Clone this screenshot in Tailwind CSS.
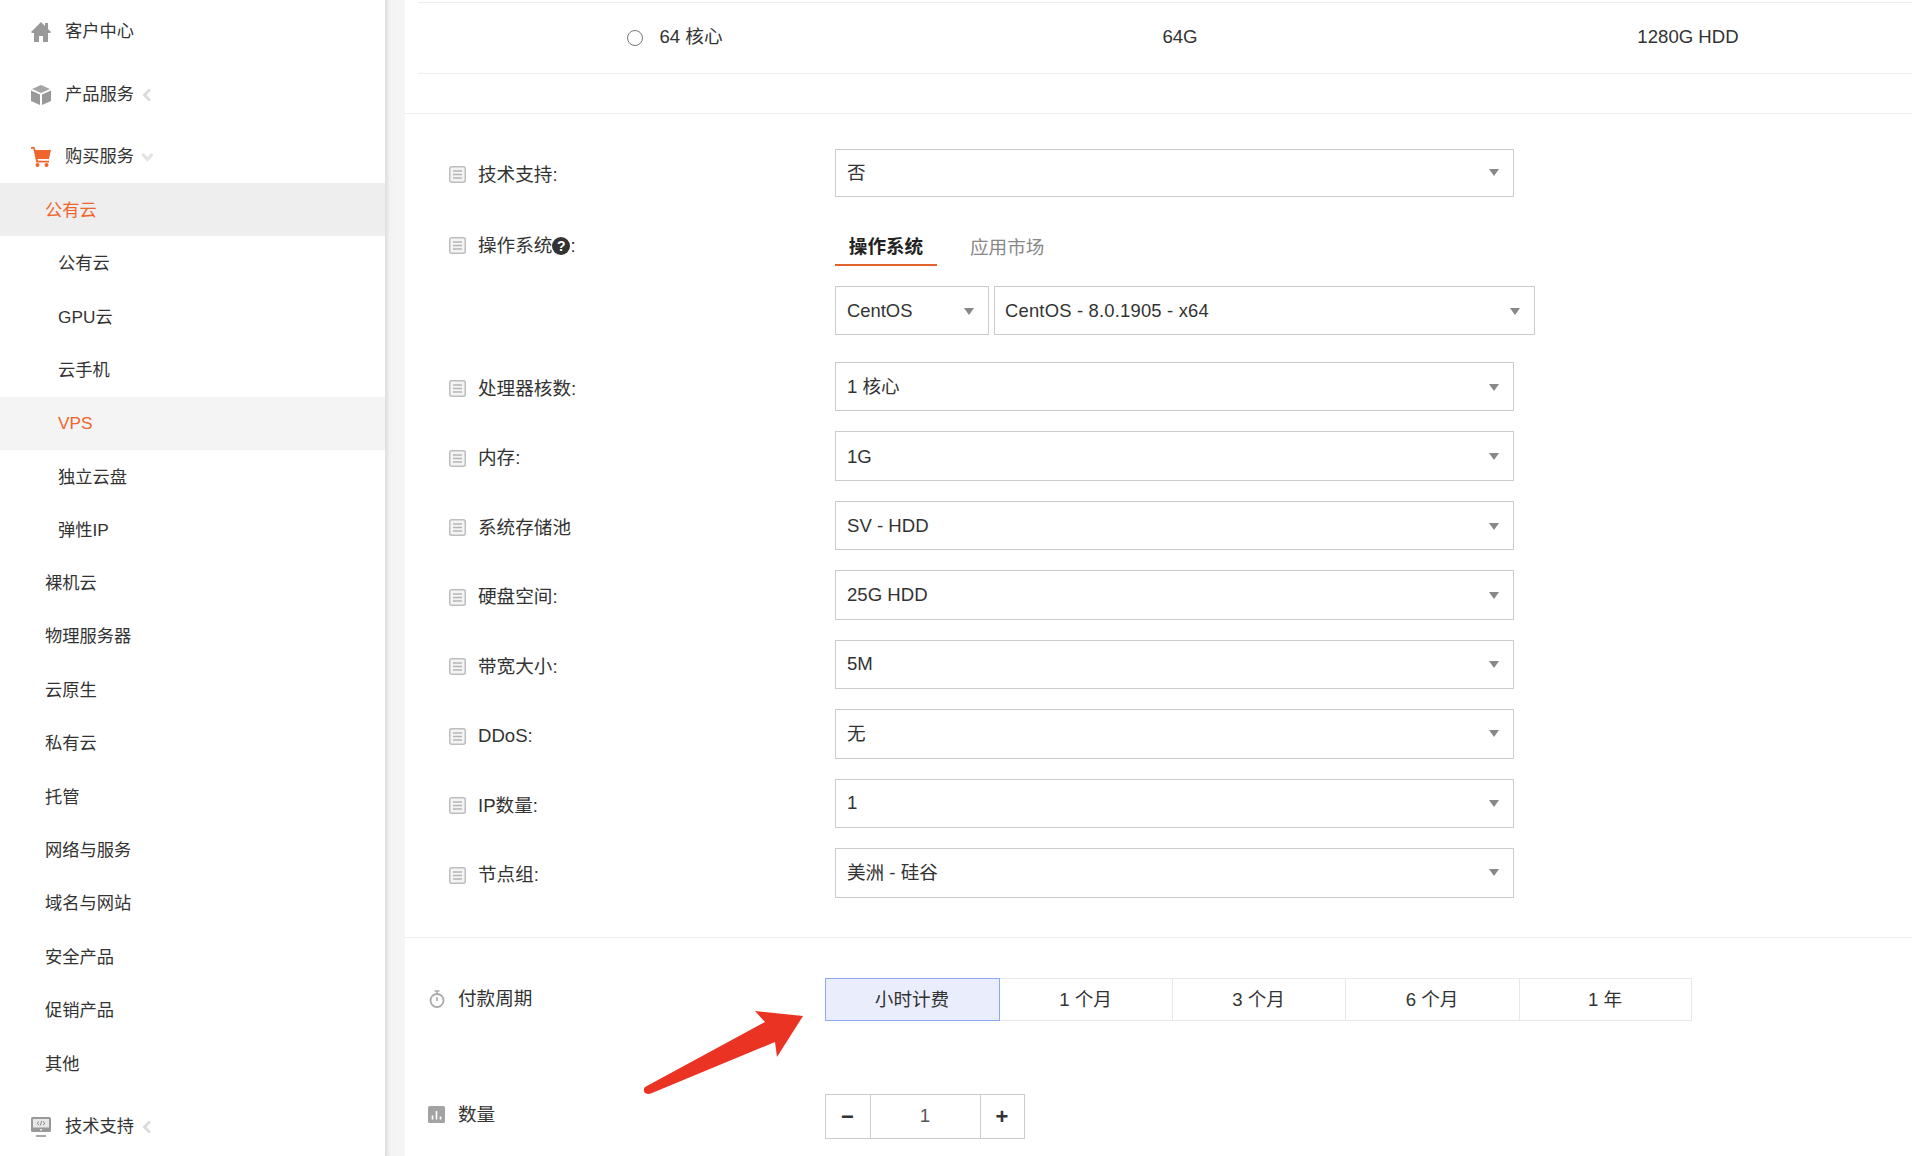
<!DOCTYPE html>
<html lang="zh-CN">
<head>
  <meta charset="UTF-8" />
  <title>购买服务 - VPS</title>
  <script src="https://cdn.jsdelivr.net/npm/@tailwindcss/browser@4"></script>
</head>
<body class="bg-white text-[#333] font-['Liberation_Sans','Noto_Sans_CJK_SC',sans-serif]">
  <svg class="hidden">
    <symbol id="list" viewBox="0 0 17 17">
      <rect x="0.75" y="0.75" width="15.5" height="15.5" rx="2" fill="#f4f4f4" stroke="#bdbdbd" stroke-width="1.5"/>
      <path d="M4 5h9M4 8.5h9M4 12h9" stroke="#b5b5b5" stroke-width="1.4" fill="none"/>
    </symbol>
    <symbol id="caret" viewBox="0 0 10 7">
      <path d="M0 0h10L5 7z" fill="#888"/>
    </symbol>
    <symbol id="chev-left" viewBox="0 0 10 14">
      <path d="M8 1.5 2.5 7 8 12.5" fill="none" stroke="#dcdcdc" stroke-width="3"/>
    </symbol>
  </svg>

  <div class="flex h-[1156px] w-[1912px] overflow-hidden">
    <!-- Sidebar -->
    <aside class="w-[385px] shrink-0 bg-white text-[17.25px]">
      <div class="flex h-[63px] items-center pl-[31px]">
        <svg class="mr-[14px] h-[20px] w-[20px]" viewBox="0 0 20 20"><path d="M10 0 0 10l1 1h2v9h5v-6h4v6h5v-9h2l1-1-3-3V1h-3v3z" fill="#999"/></svg>
        <span>客户中心</span>
      </div>
      <div class="flex h-[63px] items-center pl-[31px]">
        <svg class="mr-[14px] h-[20px] w-[20px]" viewBox="0 0 20 20"><path d="M10 0 19 4 10 8 1 4z" fill="#a5a5a5"/><path d="M0 5.5 9 9.5V20L0 16z" fill="#999"/><path d="M20 5.5 11 9.5V20l9-4z" fill="#999"/></svg>
        <span>产品服务</span>
        <svg class="ml-[8px] h-[14px] w-[10px]"><use href="#chev-left"/></svg>
      </div>
      <div class="flex h-[57px] items-center pt-[5px] pl-[31px]">
        <svg class="mr-[14px] h-[20px] w-[20px]" viewBox="0 0 20 20"><path d="M0 0h3.5l1 3H20l-2 9H6.5l.4 1.8H18v1.7H5.300L2.400 1.700H0z" fill="#f0642d"/><circle cx="6.500" cy="18" r="2" fill="#f0642d"/><circle cx="15.500" cy="18" r="2" fill="#f0642d"/></svg>
        <span>购买服务</span>
        <svg class="ml-[7px] h-[10px] w-[13px]" viewBox="0 0 13 10"><path d="M1.500 2 6.500 7.500 11.500 2" fill="none" stroke="#e2e2e2" stroke-width="3"/></svg>
      </div>
      <div class="flex h-[53.4px] items-center bg-[#eeeeee] pl-[45px] pt-[2px] text-[#f0642d]">公有云</div>
      <div class="flex h-[53.4px] items-center pl-[58px] pt-[2px]">公有云</div>
      <div class="flex h-[53.4px] items-center pl-[58px] pt-[2px]">GPU云</div>
      <div class="flex h-[53.4px] items-center pl-[58px] pt-[2px]">云手机</div>
      <div class="flex h-[53.4px] items-center bg-[#f4f4f4] pl-[58px] pt-[1px] text-[#f0642d]">VPS</div>
      <div class="flex h-[53.4px] items-center pl-[58px] pt-[2px]">独立云盘</div>
      <div class="flex h-[53.4px] items-center pl-[58px] pt-[1px]">弹性IP</div>
      <div class="flex h-[53.4px] items-center pl-[45px] pt-[1px]">裸机云</div>
      <div class="flex h-[53.4px] items-center pl-[45px] pt-[1px]">物理服务器</div>
      <div class="flex h-[53.4px] items-center pl-[45px] pt-[1px]">云原生</div>
      <div class="flex h-[53.4px] items-center pl-[45px] pt-[1px]">私有云</div>
      <div class="flex h-[53.4px] items-center pl-[45px] pt-[1px]">托管</div>
      <div class="flex h-[53.4px] items-center pl-[45px] pt-[1px]">网络与服务</div>
      <div class="flex h-[53.4px] items-center pl-[45px] pt-[1px]">域名与网站</div>
      <div class="flex h-[53.4px] items-center pl-[45px] pt-[1px]">安全产品</div>
      <div class="flex h-[53.4px] items-center pl-[45px] pt-[1px]">促销产品</div>
      <div class="flex h-[53.4px] items-center pl-[45px] pt-[1px]">其他</div>
      <div class="flex h-[72px] items-center pl-[31px] pt-[1px]">
        <svg class="mr-[14px] h-[20px] w-[20px]" viewBox="0 0 20 20">
          <rect x="0" y="0" width="20" height="15" rx="1.500" fill="#999"/>
          <rect x="2" y="2" width="16" height="8.500" fill="#e8e8e8"/>
          <path d="M8 4.500 6 6.300 8 8M12 4.500l2 1.800L12 8M10.800 4 9.200 8.500" fill="none" stroke="#808080" stroke-width="0.900"/>
          <rect x="9" y="12" width="2" height="1.500" fill="#e8e8e8"/>
          <rect x="5" y="18" width="10" height="2" fill="#aaa"/>
        </svg>
        <span>技术支持</span>
        <svg class="ml-[8px] h-[14px] w-[10px]"><use href="#chev-left"/></svg>
      </div>
    </aside>

    <!-- Gutter -->
    <div class="w-[20px] shrink-0 bg-gradient-to-r from-[#dddddd] from-0% via-[#f3f3f3] via-25% to-[#f5f5f5]"></div>

    <!-- Main -->
    <main class="min-w-0 flex-1 overflow-hidden text-[18.6px]">
      <!-- Tail of the CPU table -->
      <div class="border-b border-[#eeeeee] pb-[39px]">
        <div class="ml-[13px] mt-[2px] grid h-[72px] grid-cols-[514px_496px_520px] items-center whitespace-nowrap border-y border-[#eeeeee] pb-[3px] text-center">
          <div class="flex items-center justify-center">
            <span class="mr-[16px] mt-[4px] h-[16px] w-[16px] rounded-full border border-[#777]"></span>
            <span>64 核心</span>
          </div>
          <div>64G</div>
          <div>1280G HDD</div>
        </div>
      </div>

      <!-- Config form -->
      <div class="border-b border-[#eeeeee] pb-[39px] pl-[44px] pt-[35px]">
        <div class="mb-[27.5px] flex">
          <div class="flex w-[386px] items-center pt-[3px]">
            <svg class="mr-[12px] h-[17px] w-[17px]"><use href="#list"/></svg>
            <span>技术支持:</span>
          </div>
          <div class="flex h-[48px] w-[679px] items-center justify-between border border-[#cccccc] pb-[1px] pl-[11px] pr-[14px]">
            <span>否</span>
            <svg class="h-[7px] w-[10px]"><use href="#caret"/></svg>
          </div>
        </div>

        <div class="mb-[26.5px] flex">
          <div class="flex h-[40px] w-[386px] items-center pt-[2px]">
            <svg class="mr-[12px] h-[17px] w-[17px]"><use href="#list"/></svg>
            <span>操作系统</span>
            <span class="flex h-[18px] w-[18px] items-center justify-center rounded-full bg-[#333] text-[14px] font-bold leading-none text-white">?</span>
            <span>:</span>
          </div>
          <div>
            <div class="flex h-[41px] items-center">
              <div class="flex h-[41px] w-[102px] items-center justify-center border-b-2 border-[#e2622e] pt-[6px] font-bold text-[#222]">操作系统</div>
              <div class="ml-[33px] pt-[5px] text-[#888]">应用市场</div>
            </div>
            <div class="mt-[20px] flex gap-[5px] text-[18.4px]">
              <div class="flex h-[49.5px] w-[154px] items-center justify-between border border-[#cccccc] pl-[11px] pr-[14px] pt-[2px]">
                <span>CentOS</span>
                <svg class="h-[7px] w-[10px]"><use href="#caret"/></svg>
              </div>
              <div class="flex h-[49.5px] w-[541px] items-center justify-between border border-[#cccccc] pl-[10px] pr-[14px] pt-[2px]">
                <span class="tracking-[0.2px]">CentOS - 8.0.1905 - x64</span>
                <svg class="h-[7px] w-[10px]"><use href="#caret"/></svg>
              </div>
            </div>
          </div>
        </div>

        <div class="mb-[20px] flex">
          <div class="flex w-[386px] items-center pt-[5px]">
            <svg class="mr-[12px] h-[17px] w-[17px]"><use href="#list"/></svg>
            <span>处理器核数:</span>
          </div>
          <div class="flex h-[49.5px] w-[679px] items-center justify-between border border-[#cccccc] pl-[11px] pr-[14px] pt-[2px]">
            <span>1 核心</span>
            <svg class="h-[7px] w-[10px]"><use href="#caret"/></svg>
          </div>
        </div>
        <div class="mb-[20px] flex">
          <div class="flex w-[386px] items-center pt-[5px]">
            <svg class="mr-[12px] h-[17px] w-[17px]"><use href="#list"/></svg>
            <span>内存:</span>
          </div>
          <div class="flex h-[49.5px] w-[679px] items-center justify-between border border-[#cccccc] pl-[11px] pr-[14px] pt-[2px]">
            <span>1G</span>
            <svg class="h-[7px] w-[10px]"><use href="#caret"/></svg>
          </div>
        </div>
        <div class="mb-[20px] flex">
          <div class="flex w-[386px] items-center pt-[5px]">
            <svg class="mr-[12px] h-[17px] w-[17px]"><use href="#list"/></svg>
            <span>系统存储池</span>
          </div>
          <div class="flex h-[49.5px] w-[679px] items-center justify-between border border-[#cccccc] pl-[11px] pr-[14px] pt-[2px]">
            <span>SV - HDD</span>
            <svg class="h-[7px] w-[10px]"><use href="#caret"/></svg>
          </div>
        </div>
        <div class="mb-[20px] flex">
          <div class="flex w-[386px] items-center pt-[5px]">
            <svg class="mr-[12px] h-[17px] w-[17px]"><use href="#list"/></svg>
            <span>硬盘空间:</span>
          </div>
          <div class="flex h-[49.5px] w-[679px] items-center justify-between border border-[#cccccc] pl-[11px] pr-[14px] pt-[1px]">
            <span>25G HDD</span>
            <svg class="h-[7px] w-[10px]"><use href="#caret"/></svg>
          </div>
        </div>
        <div class="mb-[20px] flex">
          <div class="flex w-[386px] items-center pt-[5px]">
            <svg class="mr-[12px] h-[17px] w-[17px]"><use href="#list"/></svg>
            <span>带宽大小:</span>
          </div>
          <div class="flex h-[49.5px] w-[679px] items-center justify-between border border-[#cccccc] pl-[11px] pr-[14px]">
            <span>5M</span>
            <svg class="h-[7px] w-[10px]"><use href="#caret"/></svg>
          </div>
        </div>
        <div class="mb-[20px] flex">
          <div class="flex w-[386px] items-center pt-[5px]">
            <svg class="mr-[12px] h-[17px] w-[17px]"><use href="#list"/></svg>
            <span>DDoS:</span>
          </div>
          <div class="flex h-[49.5px] w-[679px] items-center justify-between border border-[#cccccc] pl-[11px] pr-[14px]">
            <span>无</span>
            <svg class="h-[7px] w-[10px]"><use href="#caret"/></svg>
          </div>
        </div>
        <div class="mb-[20px] flex">
          <div class="flex w-[386px] items-center pt-[5px]">
            <svg class="mr-[12px] h-[17px] w-[17px]"><use href="#list"/></svg>
            <span>IP数量:</span>
          </div>
          <div class="flex h-[49.5px] w-[679px] items-center justify-between border border-[#cccccc] pl-[11px] pr-[14px]">
            <span>1</span>
            <svg class="h-[7px] w-[10px]"><use href="#caret"/></svg>
          </div>
        </div>
        <div class="flex">
          <div class="flex w-[386px] items-center pt-[5px]">
            <svg class="mr-[12px] h-[17px] w-[17px]"><use href="#list"/></svg>
            <span>节点组:</span>
          </div>
          <div class="flex h-[49.5px] w-[679px] items-center justify-between border border-[#cccccc] pl-[11px] pr-[14px]">
            <span>美洲 - 硅谷</span>
            <svg class="h-[7px] w-[10px]"><use href="#caret"/></svg>
          </div>
        </div>
      </div>

      <!-- Billing cycle and quantity -->
      <div class="pl-[23px] pt-[40px]">
        <div class="flex h-[43px] items-center">
          <div class="flex w-[396.5px] items-center">
            <svg class="mr-[12px] h-[18px] w-[18px]" viewBox="0 0 18 18"><circle cx="9" cy="10.500" r="6.500" fill="none" stroke="#aaa" stroke-width="1.800"/><path d="M6.500 1h5M9 1v3M9 7v4" fill="none" stroke="#aaa" stroke-width="1.600"/></svg>
            <span>付款周期</span>
          </div>
          <div class="flex h-[43px] w-[867px]">
            <div class="flex w-[175px] items-center justify-center border border-[#8ea8f8] bg-[#e9edfc] pt-[2px]">小时计费</div>
            <div class="flex w-[173px] items-center justify-center border-y border-r border-[#e8e8e8] pt-[2px]">1 个月</div>
            <div class="flex w-[173px] items-center justify-center border-y border-r border-[#e8e8e8] pt-[2px]">3 个月</div>
            <div class="flex w-[174px] items-center justify-center border-y border-r border-[#e8e8e8] pt-[2px]">6 个月</div>
            <div class="flex w-[172px] items-center justify-center border-y border-r border-[#e8e8e8] pt-[2px]">1 年</div>
          </div>
        </div>
        <div class="mt-[73px] flex h-[45px] items-center">
          <div class="flex w-[396.5px] items-center pb-[3px]">
            <svg class="mr-[13px] h-[17px] w-[17px]" viewBox="0 0 17 17"><rect width="17" height="17" rx="1.500" fill="#a3a3a3"/><path d="M4.500 9.500v4M8.500 5v8.500M12.500 10.500v3" stroke="#fff" stroke-width="1.600"/></svg>
            <span>数量</span>
          </div>
          <div class="flex h-[45px] w-[200px] border border-[#cccccc]">
            <div class="flex w-[45px] items-center justify-center border-r border-[#cccccc] text-[22px] font-bold">−</div>
            <div class="flex flex-1 items-center justify-center text-[#555]">1</div>
            <div class="flex w-[44px] items-center justify-center border-l border-[#cccccc] text-[22px] font-bold">+</div>
          </div>
        </div>
      </div>
    </main>
  </div>

  <!-- Red annotation arrow over the form -->
  <svg class="absolute left-0 top-0 h-[1156px] w-[1912px] pointer-events-none" viewBox="0 0 1912 1156">
    <path d="M645 1087 765 1022 755 1011 803 1016 777 1057 775 1042 652 1093Q647 1095 644.500 1092.500Q643 1089 645 1087Z" fill="#ea3323"/>
  </svg>
</body>
</html>
